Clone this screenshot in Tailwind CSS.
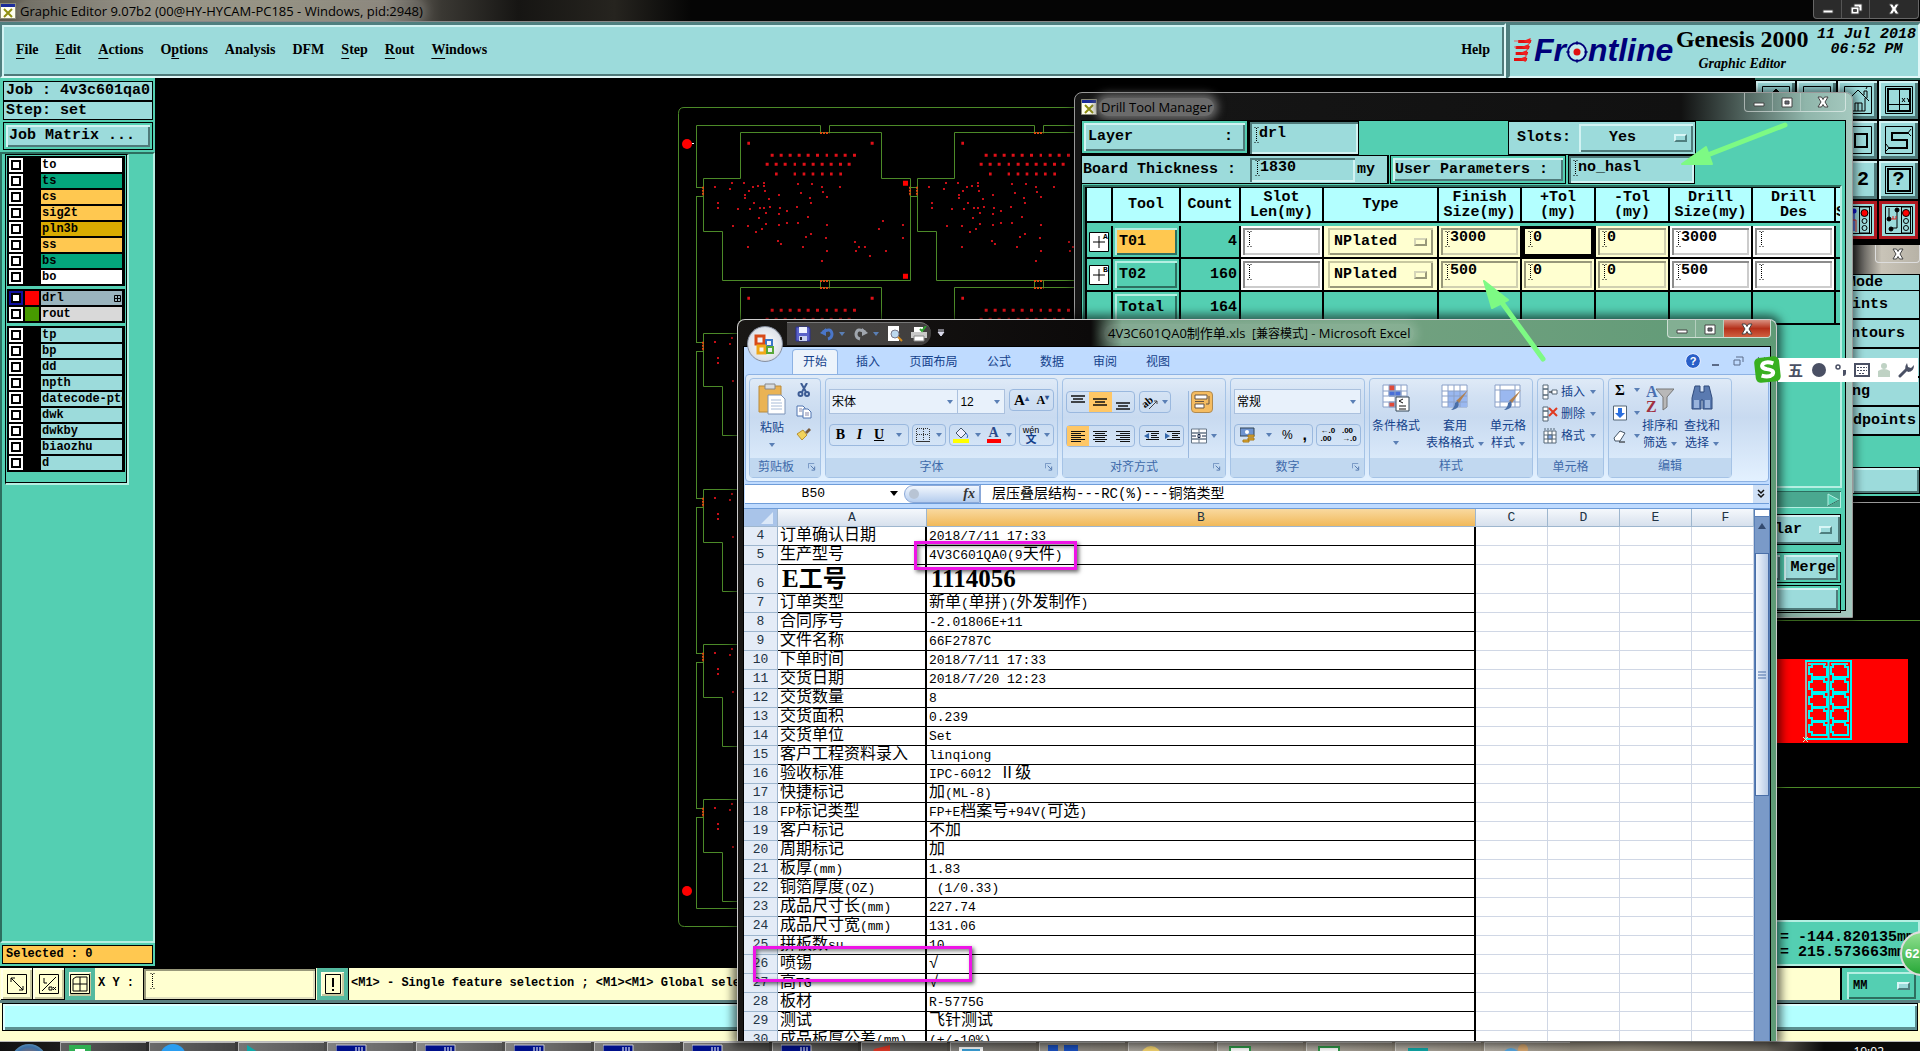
<!DOCTYPE html>
<html lang="zh-CN">
<head>
<meta charset="utf-8">
<title>Graphic Editor</title>
<script src="https://cdn.jsdelivr.net/npm/@tailwindcss/browser@4"></script>
</head>
<body class="relative flex h-screen flex-col overflow-hidden bg-black font-['Liberation_Mono','Noto_Sans_CJK_SC',monospace] text-[15px] font-bold leading-[18px] text-black">

<!-- shared icon shapes -->
<svg class="hidden">
  <symbol id="ibeam" viewBox="0 0 5 16"><path d="M.5 .5h1M3.500 .5h1M.5 15.500h1M3.500 15.500h1" stroke="#000"/><path d="M2.500 1v14" stroke="#000" stroke-dasharray="1 1"/></symbol>
  <symbol id="xlogo" viewBox="0 0 16 16"><path d="M.5 .5h15v15H.5z" fill="#fffff0" stroke="#8a8a78"/><path d="M1 1h14v3H1z" fill="#1a2a9a"/><path d="m4 6 8 8M12 6l-8 8" stroke="#8f8f10" stroke-width="2"/></symbol>
  <symbol id="knob" viewBox="0 0 13 8"><path d="M0 0h13v8H0z" fill="#4f7f7f"/><path d="M0 0h13l-2 2H2v4L0 8z" fill="#d8f6f6"/><path d="M2 2h9v4H2z" fill="#9cdbdb"/></symbol>
  <symbol id="knoby" viewBox="0 0 13 8"><path d="M0 0h13v8H0z" fill="#98987a"/><path d="M0 0h13l-2 2H2v4L0 8z" fill="#d5d5b8"/><path d="M2 2h9v4H2z" fill="#ffffd0"/></symbol>
  <symbol id="dn" viewBox="0 0 6 4"><path d="M0 0h6L3 4z" fill="#5a7fb5"/></symbol>
  <symbol id="launch" viewBox="0 0 9 9"><path d="M.5 6V.5H7" fill="none" stroke="#6d8fbf"/><path d="M3 3l4 4M7.500 4v4H4" fill="none" stroke="#4a70a8"/></symbol>
  <symbol id="min" viewBox="0 0 14 12"><path d="M2 7h10v3H2z" fill="#fff" stroke="#444"/></symbol>
  <symbol id="max" viewBox="0 0 14 12"><path d="M2 2h10v9H2z" fill="#fff" stroke="#444"/><path d="M5 5h4v3H5z" fill="#667" stroke="#444"/></symbol>
  <symbol id="restore" viewBox="0 0 14 12"><path d="M5 1h8v7H5z" fill="#fff" stroke="#444"/><path d="M2 4h8v7H2z" fill="#fff" stroke="#444"/><path d="M4.500 6.500h3v2h-3z" fill="#444" stroke="#444"/></symbol>
  <symbol id="cls" viewBox="0 0 14 12"><path d="M2 1h3.500L7 3.500 8.500 1H12L9 6l3 5H8.500L7 8.500 5.500 11H2l3-5z" fill="#fff" stroke="#444"/></symbol>
</svg>

<!-- title bar -->
<header class="flex h-[21px] shrink-0 items-center bg-[linear-gradient(90deg,#5b584e_0,#8d897c_8%,#8a8776_14%,#7f7a70_20%,#3a3833_23%,#161513_27%,#26241f_32%,#050505_36%)] font-['Open_Sans','Noto_Sans',sans-serif] text-[13px] font-normal">
  <svg class="h-4 w-4"><use href="#xlogo"/></svg>
  <h1 class="ml-1 rounded-full bg-white/10 shadow-[0_0_10px_4px_rgba(255,255,255,.15)]">Graphic Editor 9.07b2 (00@HY-HYCAM-PC185 - Windows, pid:2948)</h1>
  <div class="ml-auto mr-px flex h-[19px] self-start rounded-b border border-t-0 border-[#666] bg-[#2b2b2b]">
    <button aria-label="Minimize" class="flex w-7 items-center justify-center border-r border-[#555]"><svg class="h-3 w-3.5"><use href="#min"/></svg></button>
    <button aria-label="Restore" class="flex w-7 items-center justify-center border-r border-[#555]"><svg class="h-3 w-3.5"><use href="#restore"/></svg></button>
    <button aria-label="Close" class="flex w-12 items-center justify-center"><svg class="h-3 w-3.5"><use href="#cls"/></svg></button>
  </div>
</header>

<!-- menu bar and brand -->
<div class="flex h-[57px] shrink-0 border-t border-[#888] bg-[#4f7f7f] pt-px">
  <nav class="flex grow items-center gap-[17px] border-2 border-l-[#4f7f7f] border-t-[#4f7f7f] border-b-[#e0f8f8] border-r-[#e0f8f8] bg-[#9cdbdb] px-3.5 pb-0.5 font-['Liberation_Serif',serif] text-[14px] shadow-[inset_2px_2px_#d2f3f3,inset_-2px_-2px_#4f7a7a]">
    <a href="#"><u class="underline-offset-4">F</u>ile</a><a href="#"><u class="underline-offset-4">E</u>dit</a><a href="#"><u class="underline-offset-4">A</u>ctions</a><a href="#">O<u class="underline-offset-4">p</u>tions</a><a href="#">Analysis</a><a href="#">DFM</a><a href="#"><u class="underline-offset-4">S</u>tep</a><a href="#"><u class="underline-offset-4">R</u>out</a><a href="#"><u class="underline-offset-4">W</u>indows</a>
    <a href="#" class="ml-auto">Help</a>
  </nav>
  <div class="ml-0.5 flex w-[412px] border-2 border-l-[#4f7f7f] border-t-[#4f7f7f] border-b-[#e0f8f8] border-r-[#e0f8f8] bg-[#9cdbdb] pl-1">
    <div class="flex items-center pb-0.5 font-['Liberation_Sans',sans-serif] text-[32px] italic text-[#00007a]">
      <svg class="h-6 w-5" viewBox="0 0 24 24" preserveAspectRatio="none"><path d="M5 2h16l-1 3H5zM2 8h17l-1 3H2zM2 14h15l-1 3H2zM0 20h16l-1 3H0z" fill="#e01010"/><path d="M11 3l9-3-1 6zM9 9l9-3-1 6zM7 15l9-3-1 6zM6 21l9-3-1 6z" fill="#f02020"/><path d="M5 3H0M3 9H0" stroke="#e55"/></svg>
      <span>Fr</span>
      <svg class="mt-1 h-[22px] w-[22px]" viewBox="0 0 22 22"><circle cx="11" cy="11" r="9" fill="#c3ecec" stroke="#00007a" stroke-width="2"/><path d="M11 0v4M11 18v4M0 11h4M18 11h4" stroke="#00007a"/><circle cx="11" cy="11" r="3.500" fill="#e01010"/></svg>
      <span>ntline</span>
    </div>
    <div class="ml-auto w-[138px] pt-0.5 text-center font-['Liberation_Serif',serif]">
      <p class="text-[24px] leading-6">Genesis 2000</p>
      <p class="mt-1 text-[14px] italic">Graphic Editor</p>
    </div>
    <div class="ml-1 w-[103px] pt-0.5 text-center text-[15px] italic leading-[15px]"><p>11 Jul 2018</p><p>06:52 PM</p></div>
  </div>
</div>

<!-- workspace -->
<main class="flex min-h-0 grow">
  <aside class="flex w-[155px] shrink-0 flex-col bg-[#54cfb2]">
    <div class="mx-[3px] mt-[3px] flex h-[39px] w-[150px] flex-col divide-y-2 divide-black border border-black bg-[#9cdbdb]">
      <p class="h-[20px] whitespace-pre pl-0.5">Job : 4v3c601qa0</p><p class="pl-0.5">Step: set</p>
    </div>
    <div class="mx-[3px] mt-0.5 w-[150px] border border-black p-0.5">
      <button class="h-[22px] w-full bg-[#9cdbdb] pl-[3px] text-left shadow-[inset_2px_2px_#d2f3f3,inset_-2px_-2px_#4f7a7a]">Job Matrix ...</button>
    </div>
    <div class="mt-0.5 flex-1 border-2 border-l-[#2d6f60] border-t-[#2d6f60] border-b-[#b5efe2] border-r-[#b5efe2]">
      <div class="ml-[3px] w-[124px] border border-r-2 border-b-2 border-black border-b-[#b5efe2] border-r-[#b5efe2] text-[12px] leading-[14px]">
        <ul id="layers" class="flex h-[328px] flex-col border-b border-r border-black pl-px pr-px pt-px"></ul>
      </div>
    </div>
    <div class="p-0.5"><p class="h-[19px] border border-black bg-[#ffc850] pl-[3px] text-[12px] leading-4">Selected : 0</p></div>
  </aside>

  <!-- board canvas -->
  <section class="min-w-0 grow overflow-hidden">
    <svg class="h-full w-full" fill="none" stroke="#4c8a28">
      <defs>
        <g id="holes" stroke="#c81018" stroke-width="6">
          <path stroke-width="9" stroke="#e01018" d="M262 190h8M632 190h9M332 226h9M359 226h9M386 226h9M413 226h9M440 226h9M468 226h9M497 226h7M524 226h9M551 226h9M579 226h9M317 253h9M344 253h9M371 253h9M401 253h7M428 253h9M455 253h9M482 253h9M509 253h9M537 253h9M563 253h9M345 282h8M401 282h7M428 282h8M455 282h8M483 282h8M510 282h8M538 282h8"/>
          <path d="M162 321h6M213 309h6M207 327h6M249 309h6M276 321h6M291 318h6M309 309h6M309 318h6M264 333h6M312 333h6M252 345h6M252 354h6M324 357h6M354 345h6M171 369h6M171 384h6M231 387h6M267 387h6M279 369h6M297 384h6M309 384h6M327 381h6M315 399h6M294 414h6M357 384h6M354 402h6M378 393h6M408 381h6M420 339h6M411 312h6M453 312h6M483 321h6M486 336h6M498 351h6M537 321h6M447 354h6M450 369h6M441 411h6M411 429h6M378 429h6M354 435h6M315 432h6M303 447h6M285 456h6M261 438h6M216 438h6M261 501h6M351 483h6M360 492h6M435 471h6M450 462h6M426 501h6M498 435h6M495 474h6M498 513h6M483 543h6M582 486h6M594 501h6M585 513h6M612 501h6M627 528h6M675 513h6M654 447h6M666 423h6M726 435h6M726 474h6"/>
          <path stroke="#f00" stroke-width="15" d="M729 310h15M729 589h15"/>
          <path stroke="#e04a10" stroke-dasharray="6 3" d="M480 159h28M480 603h28M480 624h28M129 320v28M750 320v28"/>
        </g>
        <g id="board">
          <path d="M740.500 178.500v-46h141v46h29v102h-188v-49h-19v-53zM820.500 280v8M829.500 280v8M696 187.500h7M696 196.500h7M911 187.500h7M911 196.500h7"/>
          <use href="#holes" transform="translate(660 80) scale(.3333)"/>
        </g>
      </defs>
      <g transform="translate(-155 -78)">
        <path d="M1920 107.500H684q-5.500 0-5.500 6V920q0 6.500 6 6.500H1920M696.500 187v-61.500h124v7M829.500 132v-6.500h205v7M1043.500 132v-6.500H1900M696.500 197v146M696.500 351v147M696.500 507v146M696.500 662v146M696.500 817v91.500H1000M1777 620.500h143M1777 787.500h143"/>
        <use href="#board"/><use href="#board" x="214"/>
        <use href="#board" y="155"/><use href="#board" x="214" y="155"/>
        <use href="#board" y="311"/><use href="#board" y="466"/><use href="#board" y="621"/>
        <g fill="#f00" stroke="none"><circle cx="687" cy="144" r="5"/><circle cx="687" cy="891" r="5"/></g>
        <path d="M692 143.500h2" stroke="#fff"/>
        <path d="M1770 659h138v84h-138z" fill="#f00" stroke="none"/>
        <g stroke="#00f6f6" stroke-width="2">
          <path d="M1806 661h45v78h-45zM1828.500 662v77"/>
          <path stroke="#9ab0b0" d="M1806 662v76M1808 664h18M1831 664h17"/>
          <path id="pv" d="M1809 667l3 0v-3h12v3h3v10h-15v-3h-3zM1831 667h2v-3h12v3h3v10h-15v-3h-2z"/>
          <use href="#pv" y="15"/><use href="#pv" y="30"/><use href="#pv" y="44"/><use href="#pv" y="58"/>
        </g>
        <path d="M1803 742l5-5M1803 737l5 5" stroke="#cfc"/>
      </g>
    </svg>
  </section>
</main>

<!-- coordinate and status rows -->
<footer class="shrink-0">
  <div class="flex h-[34px] border-t-2 border-black bg-[#ffffd0] text-[12px]">
    <button aria-label="Zoom area" class="ml-px flex w-8 items-center justify-center border-r border-b border-black shadow-[inset_2px_2px_#ffffe8,inset_-2px_-2px_#c8c8a0]"><svg class="h-5 w-5" viewBox="0 0 20 20" fill="none" stroke="#000"><path d="M.5 .5h19v19H.5zM4 4l12 12M4 8V4h4M16 12v4h-4"/></svg></button>
    <button aria-label="Toggle coordinates" class="flex w-8 items-center justify-center border-r border-b border-black shadow-[inset_2px_2px_#ffffe8,inset_-2px_-2px_#c8c8a0]"><svg class="h-5 w-5" viewBox="0 0 20 20" fill="none" stroke="#000"><path d="M.5 .5h19v19H.5zM3 17 17 3M5 4v5h3M10 13h3v3h-3zM14 13l3 3M17 13l-3 3"/></svg></button>
    <button aria-label="Grid" class="flex w-[30px] items-center justify-center border-4 border-[#54b99f] shadow-[inset_1px_1px_#ffffe8,inset_-2px_-2px_#c8c8a0]"><svg class="h-5 w-5 shrink-0" viewBox="0 0 20 20" fill="none" stroke="#000"><path d="M.5 .5h19v19H.5zM3 5l3-2h11v14H3zM10 3v14M3 10h14"/></svg></button>
    <label for="xy" class="w-12 whitespace-pre pl-[3px] leading-[30px]">X Y :</label>
    <span class="flex w-[173px] border border-black p-1 shadow-[inset_2px_2px_#98987a,inset_-2px_-2px_#e0e0c0]"><svg class="ml-0.5 h-4 w-[5px] shrink-0"><use href="#ibeam"/></svg><input id="xy" class="w-full min-w-0 outline-none"></span>
    <button aria-label="Message" class="ml-px flex w-[31px] items-center justify-center border-4 border-[#54b99f] shadow-[inset_1px_1px_#ffffe8,inset_-2px_-2px_#c8c8a0]"><svg class="h-5 w-4 shrink-0" viewBox="0 0 16 20" fill="none" stroke="#000"><path d="M.5 .5h15v19H.5z"/><path d="M8 4v9M8 15v2" stroke-width="2"/></svg></button>
    <p class="grow border-l border-black pl-0.5 leading-[30px]">&lt;M1&gt; - Single feature selection ; &lt;M1&gt;&lt;M1&gt; Global selec</p>
    <div class="w-[80px] border-l-2 border-black bg-[#54cfb2] p-1 pl-[5px]"><button class="flex h-[27px] w-[69px] items-center justify-between px-[6px] shadow-[inset_2px_2px_#b5efe2,inset_-2px_-2px_#2d6f60]">MM <svg class="h-2 w-[13px]"><use href="#knob"/></svg></button></div>
  </div>
  <div class="border-t-[3px] border-[#5c8080] bg-[#ffffd0] pb-2.5"><div class="mx-0.5 h-7 border border-black bg-[#b3ffff] shadow-[inset_2px_2px_#dcffff,inset_-2px_-3px_#5c9090]"></div></div>
  <!-- taskbar -->
  <div id="tasks" class="flex h-2.5 gap-[3px] overflow-hidden border-t border-[#bbb] bg-[linear-gradient(90deg,#111_0,#555_20%,#3b3935_45%,#8b8478_60%,#978f80_85%,#6f6a60_92%,#0a0a0a_95%)] pr-2 font-['Open_Sans',sans-serif] text-[12px] font-normal text-white"></div>
</footer>

<!-- coordinate readout -->
<div class="absolute right-0 top-[920px] h-[46px] w-[150px] border-2 border-b-[#b5efe2] border-l-[#2d6f60] border-r-[#b5efe2] border-t-[#b5efe2] bg-[#54cfb2] pl-2 pt-2 leading-[15px] whitespace-pre"><p>= -144.820135mm</p><p>= 215.573663mm</p></div>

<!-- tool palette -->
<div class="absolute right-0 top-[78px] grid h-[165px] w-[165px] grid-cols-[repeat(4,39px)] grid-rows-[repeat(4,38px)] gap-0.5 border-t-2 border-[#2d6f60] bg-black p-px">
  <button aria-label="Up" class="flex items-center justify-center bg-[#9cdbdb] shadow-[inset_2px_2px_#d2f3f3,inset_-3px_-3px_#4f7a7a]"><svg class="h-7 w-7" viewBox="0 0 28 28" fill="none" stroke="#000"><path d="M.5 .5h27v27H.5z"/><path d="M14 3l5 5h-3v8h-4V8H9z" fill="#000"/></svg></button>
  <button aria-label="Down" class="flex items-center justify-center bg-[#9cdbdb] shadow-[inset_2px_2px_#d2f3f3,inset_-3px_-3px_#4f7a7a]"><svg class="h-7 w-7" viewBox="0 0 28 28" fill="none" stroke="#000"><path d="M.5 .5h27v27H.5z"/></svg></button>
  <button aria-label="Home" class="flex items-center justify-center bg-[#9cdbdb] shadow-[inset_2px_2px_#d2f3f3,inset_-3px_-3px_#4f7a7a]"><svg class="h-7 w-7" viewBox="0 0 28 28" fill="none" stroke="#000"><path d="M.5 .5h27v27H.5zM3 15 14 4l11 11M7 12v13h14V12M11 25v-8h7v8M14 17v8M20 9V5h3v7M22 3l1-2"/></svg></button>
  <button aria-label="Coordinates view" class="flex items-center justify-center bg-[#9cdbdb] shadow-[inset_2px_2px_#d2f3f3,inset_-3px_-3px_#4f7a7a]"><svg class="h-7 w-7" viewBox="0 0 28 28" fill="none" stroke="#000"><path d="M.5 .5h27v27H.5z"/><path d="M3 3h22v22H3z" stroke-width="2"/><path d="M14.500 3v22M3 18.500h22M17 12l3 4M20 12l-3 4M22 12l1.500 2L25 12M23.500 14v2"/></svg></button>
  <button aria-label="Back" class="bg-[#9cdbdb]"></button><button aria-label="Forward" class="bg-[#9cdbdb]"></button>
  <button aria-label="Frame" class="flex items-center justify-center bg-[#9cdbdb] shadow-[inset_2px_2px_#d2f3f3,inset_-3px_-3px_#4f7a7a]"><svg class="h-7 w-7" viewBox="0 0 28 28" fill="none" stroke="#000"><path d="M.5 .5h27v27H.5z"/><path d="M11 8h12v13H11z" stroke-width="2"/></svg></button>
  <button aria-label="Path" class="flex items-center justify-center bg-[#9cdbdb] shadow-[inset_2px_2px_#d2f3f3,inset_-3px_-3px_#4f7a7a]"><svg class="h-7 w-7" viewBox="0 0 28 28" fill="none" stroke="#000"><path d="M.5 .5h27v27H.5z"/><path d="M23 7H7v7h15v8H4" stroke-width="2"/><path d="M26 3l-3 4 3 3M1 18l3 4-3 3"/></svg></button>
  <button aria-label="Zoom in" class="bg-[#9cdbdb]"></button><button aria-label="Zoom out" class="bg-[#9cdbdb]"></button>
  <button class="flex items-center justify-end bg-[#9cdbdb] pr-2 text-[20px] shadow-[inset_2px_2px_#d2f3f3,inset_-3px_-3px_#4f7a7a]">:2</button>
  <button aria-label="Query" class="flex items-center justify-center bg-[#9cdbdb] text-[20px] shadow-[inset_2px_2px_#d2f3f3,inset_-3px_-3px_#4f7a7a]"><span class="flex h-6 w-6 items-center justify-center border-2 border-black outline outline-offset-1">?</span></button>
  <button aria-label="Snap" class="bg-[#9cdbdb]"></button><button aria-label="Measure" class="bg-[#9cdbdb]"></button>
  <button aria-label="Stop nets" class="flex items-center justify-center border-[3px] border-[#b01820] bg-[#9cdbdb]"><svg class="h-7 w-7 shrink-0" viewBox="0 0 28 28" fill="none" stroke="#000"><path d="M.5 .5h27v27H.5zM15.500 1h10v26h-10z"/><circle cx="20.500" cy="7" r="3.500" fill="#f00"/><circle cx="20.500" cy="15" r="2.500"/><circle cx="20.500" cy="22" r="2.500"/><circle cx="10" cy="5" r="2.500" fill="#11c" stroke="none"/><path d="M10 7v18" stroke="#11c"/><path d="M4 14h8v12" stroke="#d22"/></svg></button>
  <button aria-label="Stop shorts" class="flex items-center justify-center border-[3px] border-[#b01820] bg-[#9cdbdb]"><svg class="h-7 w-7 shrink-0" viewBox="0 0 28 28" fill="none" stroke="#000"><path d="M.5 .5h27v27H.5zM16.500 1h9v26h-9z"/><circle cx="21" cy="7" r="3.500" fill="#f00"/><circle cx="21" cy="15" r="2.500"/><circle cx="21" cy="22" r="2.500"/><path d="M4 2v11M12 4v18H6"/><circle cx="4" cy="13" r="2" fill="#000"/><circle cx="12" cy="4" r="2" fill="#000"/><circle cx="6" cy="23" r="2" fill="#000"/><path d="M6 13h5M8 10v3M11 10v3" stroke="#d22"/></svg></button>
</div>

<!-- selection mode popup -->
<aside class="absolute right-0 top-[245px] flex h-[258px] w-[70px] flex-col border-b border-[#999] bg-black pb-1.5">
  <div class="flex h-[29px] shrink-0 items-start justify-end bg-[linear-gradient(90deg,#222,#c9c4b8_45%,#b7b2a6)]"><button aria-label="Close popup" class="flex h-[18px] w-[45px] items-center justify-center rounded-b border border-t-0 border-[#ddd]"><svg class="h-3 w-3.5"><use href="#cls"/></svg></button></div>
  <div class="flex flex-1 flex-col overflow-hidden border-l border-[#2d6f60] bg-[#54cfb2]">
    <p class="h-[17px] border border-black bg-[#9cdbdb] -indent-[5px] leading-4">Mode</p>
    <button class="h-[29px] border-b-2 border-r border-black bg-[#9cdbdb] text-left -indent-[17px]">Points</button>
    <button class="h-[29px] border-b-2 border-r border-black bg-[#9cdbdb] text-left -indent-[18px]">Contours</button>
    <button class="h-[29px] border-b-2 border-r border-black bg-[#9cdbdb] pl-2 text-left">s</button>
    <button class="h-[29px] border-b-2 border-r border-black bg-[#9cdbdb] pl-px text-left">ng</button>
    <button class="h-[29px] border-b-2 border-r border-black bg-[#9cdbdb] text-left -indent-[16px]">Endpoints</button>
    <button aria-label="Reset selection" class="mb-0.5 mt-auto h-[27px] border border-black bg-[#9cdbdb] shadow-[inset_2px_2px_#d2f3f3,inset_-2px_-2px_#4f7a7a]"></button>
  </div>
</aside>

<!-- drill tool manager -->
<section class="absolute left-[1074px] top-[92px] flex h-[526px] w-[779px] flex-col rounded-t-lg border border-[#999] bg-[linear-gradient(90deg,#161616_0,#111_78%,#8fb5aa_94%,#a5c9bf)] px-1.5 pb-1.5 shadow-[0_0_8px_3px_rgba(0,0,0,.5)]">
  <div class="flex h-[27px] shrink-0 items-center font-['Open_Sans','Noto_Sans',sans-serif] text-[13px] font-normal">
    <svg class="h-4 w-4"><use href="#xlogo"/></svg><h2 class="ml-0.5 rounded-full bg-[#6b6b6b] px-0.5 shadow-[0_0_8px_4px_#6b6b6b]">Drill Tool Manager</h2>
    <div class="ml-auto flex h-[19px] self-start rounded-b border border-t-0 border-white/50">
      <button aria-label="Minimize tool manager" class="flex w-7 items-center justify-center border-r border-white/30"><svg class="h-3 w-3.5"><use href="#min"/></svg></button>
      <button aria-label="Maximize tool manager" class="flex w-7 items-center justify-center border-r border-white/30"><svg class="h-3 w-3.5"><use href="#max"/></svg></button>
      <button aria-label="Close tool manager" class="flex w-11 items-center justify-center"><svg class="h-3 w-3.5"><use href="#cls"/></svg></button>
    </div>
  </div>
  <div class="flex min-h-0 flex-1 flex-col border border-black bg-[#54cfb2]">
    <div class="flex h-[34px] shrink-0">
      <div class="w-[167px] border-r-2 border-b-2 border-black p-0.5"><button class="flex h-full w-full items-center justify-between bg-[#9cdbdb] pl-1 pr-3 shadow-[inset_2px_2px_#d2f3f3,inset_-2px_-2px_#4f7a7a]"><span>Layer</span><span>:</span></button></div>
      <span class="flex w-[110px] border border-black bg-[#9cdbdb] p-1 pt-[3px] shadow-[inset_2px_2px_#4f7a7a,inset_-2px_-2px_#d2f3f3]"><svg class="mt-0.5 h-4 w-[5px] shrink-0"><use href="#ibeam"/></svg><input aria-label="Layer name" value="drl" class="h-[18px] w-full min-w-0 outline-none"></span>
      <div class="ml-[149px] flex w-[188px] items-center border border-black bg-[#9cdbdb] pl-2 pr-0.5"><span class="mr-2">Slots:</span><button class="flex h-[28px] flex-1 items-center justify-between bg-[#9cdbdb] pl-[30px] pr-1.5 shadow-[inset_2px_2px_#d2f3f3,inset_-2px_-2px_#4f7a7a]">Yes <svg class="h-2 w-[13px]"><use href="#knob"/></svg></button></div>
    </div>
    <div class="flex h-[29px] shrink-0">
      <div class="flex w-[307px] items-center border-y border-r-2 border-black bg-[#9cdbdb] pl-px"><label for="thick" class="w-[167px]">Board Thickness :</label><span class="flex h-[24px] w-[105px] p-1 pl-[5px] pt-0.5 shadow-[inset_2px_2px_#4f7a7a,inset_-2px_-2px_#d2f3f3]"><svg class="h-4 w-[5px] shrink-0"><use href="#ibeam"/></svg><input id="thick" value="1830" class="h-4 w-full min-w-0 outline-none"></span><span class="ml-0.5">my</span></div>
      <div class="ml-px w-[176px] border border-black p-0.5"><button class="h-full w-full bg-[#9cdbdb] pl-0.5 text-left shadow-[inset_2px_2px_#d2f3f3,inset_-2px_-2px_#4f7a7a]">User Parameters :</button></div>
      <span class="ml-0.5 flex w-[127px] border border-black bg-[#9cdbdb] p-1 shadow-[inset_2px_2px_#4f7a7a,inset_-2px_-2px_#d2f3f3]"><svg class="h-4 w-[5px] shrink-0"><use href="#ibeam"/></svg><input aria-label="User parameters" value="no_hasl" class="h-4 w-full min-w-0 outline-none"></span>
    </div>
    <div class="ml-px mr-[3px] mt-px h-[303px] shrink-0 overflow-hidden border-2 border-b-[#b5efe2] border-l-[#2d6f60] border-r-[#b5efe2] border-t-[#2d6f60]">
      <table class="w-[760px] table-fixed border-separate border-spacing-0 border-l-2 border-black">
        <colgroup><col class="w-[26px]"><col class="w-[68px]"><col class="w-[60px]"><col class="w-[83px]"><col class="w-[115px]"><col class="w-[83px]"><col class="w-[74px]"><col class="w-[74px]"><col class="w-[83px]"><col class="w-[83px]"><col></colgroup>
        <thead><tr class="h-9 bg-[#b3ffff] leading-[15px] [&>th]:border-r-2 [&>th]:border-b-2 [&>th]:border-t [&>th]:border-black [&>th]:p-0"><th></th><th>Tool</th><th>Count</th><th>Slot<br>Len(my)</th><th>Type</th><th>Finish<br>Size(my)</th><th>+Tol<br>(my)</th><th>-Tol<br>(my)</th><th>Drill<br>Size(my)</th><th>Drill<br>Des</th><th class="text-left"><br>S</th></tr></thead>
        <tbody id="tools" class="[&_td]:border-r-2 [&_td]:border-b-2 [&_td]:border-black [&_td]:p-0"></tbody>
      </table>
    </div>
    <div class="mr-1 mt-[3px] flex h-[17px] shrink-0 items-center justify-end bg-[#4aa890] shadow-[inset_1px_1px_#2d6f60,inset_-1px_-1px_#b5efe2]"><svg class="h-3.5 w-3.5" viewBox="0 0 14 14"><path d="M1 1l11 6-11 6z" fill="#54cfb2" stroke="#b5efe2"/><path d="M1 13l11-6" stroke="#2d6f60"/></svg></div>
    <div class="mr-1 mt-1.5 flex h-[31px] shrink-0 justify-end border border-black"><button class="flex w-[150px] items-center justify-end gap-[17px] bg-[#9cdbdb] pr-2 shadow-[inset_2px_2px_#d2f3f3,inset_-2px_-2px_#4f7a7a]">Regular <svg class="h-2 w-[13px]"><use href="#knob"/></svg></button></div>
    <div class="mr-1 mt-[7px] flex h-[31px] shrink-0 justify-end gap-1 border border-black p-0.5"><button class="w-[100px] bg-[#9cdbdb] shadow-[inset_2px_2px_#d2f3f3,inset_-2px_-2px_#4f7a7a]">Apply</button><button class="w-[54px] bg-[#9cdbdb] pl-1 shadow-[inset_2px_2px_#d2f3f3,inset_-2px_-2px_#4f7a7a]">Merge</button></div>
    <div class="mr-1 mt-0.5 flex h-[28px] shrink-0 border border-black p-0.5"><button aria-label="Close manager" class="w-full bg-[#9cdbdb] shadow-[inset_2px_2px_#d2f3f3,inset_-2px_-2px_#4f7a7a]"></button></div>
  </div>
</section>

<!-- spreadsheet window -->
<section class="absolute bottom-2.5 left-[737px] top-[319px] flex w-[1040px] flex-col rounded-t-lg border border-b-0 border-[#ccc] bg-[linear-gradient(90deg,#191715_0,#0c0a0a_34%,#6f9c80_37%,#72a180_62%,#5f9a76_100%)] px-[5px] font-['Liberation_Sans','Noto_Sans_CJK_SC',sans-serif] text-[12px] font-normal shadow-[0_0_10px_4px_rgba(0,0,0,.6)]">
  <div class="relative flex h-[26px] shrink-0 items-center">
    <div class="ml-11 flex h-[23px] w-[144px] items-center gap-2 rounded-r-full border-t border-[#777] bg-white/20 pl-2">
      <svg class="h-4 w-4" viewBox="0 0 16 16"><path d="M1 1h13l1 2v12H1z" fill="#5a62c8" stroke="#2b3190"/><path d="M4 1h8v6H4z" fill="#f0f4ff"/><path d="M4 10h8v5H4z" fill="#c8d0f0"/><path d="M5 11h2v3H5z" fill="#223"/></svg>
      <svg class="h-4 w-4" viewBox="0 0 16 16"><path d="M4 6q8-5 9 2 0 4-4 5" fill="none" stroke="#4a76c8" stroke-width="3"/><path d="M1 7l6-5v8z" fill="#4a76c8"/></svg><svg class="-ml-1 h-1 w-1.5"><use href="#dn"/></svg>
      <svg class="h-4 w-4" viewBox="0 0 16 16"><path d="M12 6Q4 1 3 8q0 4 4 5" fill="none" stroke="#a0a6ae" stroke-width="3"/><path d="M15 7L9 2v8z" fill="#a0a6ae"/></svg><svg class="-ml-1 h-1 w-1.5"><use href="#dn"/></svg>
      <svg class="h-4 w-4 shrink-0" viewBox="0 0 16 16"><path d="M1 0h11v15H1z" fill="#fff"/><circle cx="8" cy="8" r="4" fill="#bcd8ee" stroke="#778"/><path d="M11 11l4 4" stroke="#d08a20" stroke-width="2"/></svg>
      <svg class="h-4 w-4 shrink-0" viewBox="0 0 16 16"><path d="M3 1h9v6H3z" fill="#fff"/><path d="M0 6h16v6H0z" fill="#c8c8c8"/><path d="M3 10h10v5H3z" fill="#fff" stroke="#888"/><path d="M9 3l2 2 4-5" fill="none" stroke="#30a030" stroke-width="2"/></svg>
    </div>
    <svg class="ml-1.5 h-2 w-2" viewBox="0 0 8 8"><path d="M1 1h6M1 3l3 4 3-4z" fill="#dde" stroke="#dde"/></svg>
    <h2 class="ml-[159px] whitespace-pre rounded-full bg-white/15 px-1 shadow-[0_0_8px_4px_rgba(255,255,255,.15)] font-['Open_Sans','Noto_Sans_CJK_SC',sans-serif] text-[13px]">4V3C601QA0制作单.xls <span class="text-[12px]"> [兼容模式]</span> - Microsoft Excel</h2>
    <div class="ml-auto flex h-[18px] self-start overflow-hidden rounded-b border border-t-0 border-white/60 bg-white/20">
      <button aria-label="Minimize workbook" class="flex w-7 items-center justify-center border-r border-white/40"><svg class="h-3 w-3.5"><use href="#min"/></svg></button>
      <button aria-label="Maximize workbook" class="flex w-7 items-center justify-center border-r border-white/40"><svg class="h-3 w-3.5"><use href="#max"/></svg></button>
      <button aria-label="Close workbook" class="flex w-[46px] items-center justify-center bg-[linear-gradient(#d99080,#b5301a_50%,#d06040)]"><svg class="h-3 w-3.5"><use href="#cls"/></svg></button>
    </div>
    <!-- office button lies over title and tabs -->
    <button aria-label="Office" class="absolute left-1 top-[6px] h-9 w-9 rounded-full border border-[#8890a0] bg-[radial-gradient(#fff,#dfe3ea_65%,#aab2c0)]"><svg class="m-auto h-6 w-6" viewBox="0 0 24 24" fill="none" stroke-width="3"><path d="M3 4h8v8H3z" stroke="#d84a18"/><path d="M13 8h6v6h-6z" stroke="#3a76c8" stroke-width="2"/><path d="M5 14h7v7H5z" stroke="#f0a818"/><path d="M14 15h6v6h-6z" stroke="#58a838" stroke-width="2"/></svg></button>
  </div>
  <div class="flex min-h-0 flex-1 flex-col border border-b-0 border-black bg-[#bfdbff]">
    <nav class="flex h-[27px] shrink-0 items-end text-[#15428b]">
      <a href="#" class="ml-12 flex h-[25px] w-[46px] items-center justify-center rounded-t border border-b-0 border-[#8db2e3] bg-[#ecf3fb]">开始</a>
      <a href="#" class="flex h-[25px] w-[60px] items-center justify-center">插入</a><a href="#" class="flex h-[25px] w-[71px] items-center justify-center">页面布局</a><a href="#" class="flex h-[25px] w-[60px] items-center justify-center">公式</a><a href="#" class="flex h-[25px] w-[46px] items-center justify-center">数据</a><a href="#" class="flex h-[25px] w-[60px] items-center justify-center">审阅</a><a href="#" class="flex h-[25px] w-[46px] items-center justify-center">视图</a>
      <span class="mb-1.5 ml-auto mr-1 flex items-center gap-2.5"><span class="flex h-3.5 w-3.5 items-center justify-center rounded-full bg-[#2a5fc8] text-[11px] font-bold text-white outline outline-[#dde8ff]">?</span><svg class="h-2.5 w-14" viewBox="0 0 56 10" fill="none" stroke="#5a6a88" stroke-width="2"><path d="M2 9h7"/><path d="M24 4h6v5h-6zM26 1h7v5M48 1l7 8M55 1l-7 8" stroke-width="1"/></svg></span>
    </nav>
    <div class="mx-px flex h-[108px] shrink-0 gap-1 rounded border border-[#8db2e3] bg-[linear-gradient(#e2ecf8,#d2e1f3_20%,#c8daf0_40%,#e3f1ff)] p-[3px] text-[#15428b]">
      <!-- clipboard -->
      <div class="relative flex w-[72px] flex-col rounded border border-[#a5c3e6]">
        <div class="flex flex-1 gap-2.5 pl-2 pt-1">
          <button class="flex w-[28px] flex-col items-center"><svg class="h-8 w-7" viewBox="0 0 28 32"><path d="M1 3h22v26H1z" fill="#eab354" stroke="#b98a3a"/><path d="M7 1h10v5H7z" fill="#d8dce0" stroke="#888"/><path d="M10 12h13l4 4v15H10z" fill="#fff" stroke="#7d94b8"/><path d="M13 17h10M13 20h11M13 23h11M13 26h11" stroke="#a8bcd8"/></svg><span class="mt-1">粘贴</span><svg class="mt-1.5 h-1 w-1.5"><use href="#dn"/></svg></button>
          <div class="flex flex-col gap-2"><svg class="h-3.5 w-4" viewBox="0 0 16 14" fill="none" stroke="#3d5c94" stroke-width="2"><path d="M5 0l5 9M11 0L6 9"/><circle cx="4.500" cy="11" r="2"/><circle cx="11" cy="11" r="2"/></svg><svg class="h-3.5 w-4" viewBox="0 0 16 14"><path d="M1 1h6l2 2v8H1z" fill="#fff" stroke="#5074b0"/><path d="M7 4h5l3 3v6H7z" fill="#fff" stroke="#5074b0"/><path d="M9 8h4M9 10h4M3 4h3M3 6h3" stroke="#88a"/></svg><svg class="h-3.5 w-4" viewBox="0 0 16 14"><path d="M1 7l6-4 4 5-5 5z" fill="#f2d35c" stroke="#b89030"/><path d="M9 5l4-4 2 2-4 4z" fill="#7a5a3a"/></svg></div>
        </div>
        <p class="h-[19px] bg-[#c1d8f0] pl-2 text-[#3e6aaa]">剪贴板</p><svg class="absolute bottom-1.5 right-1 h-2 w-2"><use href="#launch"/></svg>
      </div>
      <!-- font -->
      <div class="relative flex w-[233px] flex-col rounded border border-[#a5c3e6]">
        <div class="flex flex-1 flex-col gap-2.5 px-[3px] pt-2.5">
          <div class="flex h-[25px] text-black"><span class="flex w-[130px] items-center justify-between border border-[#abc1de] bg-[#e8f1fb] px-0.5">宋体<svg class="mr-0.5 h-1 w-1.5"><use href="#dn"/></svg></span><span class="flex w-[47px] items-center justify-between border border-l-0 border-[#abc1de] bg-[#e8f1fb] px-0.5">12<svg class="mr-0.5 h-1 w-1.5"><use href="#dn"/></svg></span>
            <span class="ml-1 flex h-[22px] w-[45px] items-center justify-around rounded-sm border border-[#9ab8de] font-['Liberation_Serif',serif] font-bold"><span class="text-[15px]">A<sup class="text-[8px] text-[#2a5090]">▴</sup></span><span class="text-[12px]">A<sup class="text-[8px] text-[#2a5090]">▾</sup></span></span></div>
          <div class="flex h-[22px] gap-[3px] font-['Liberation_Serif','Noto_Sans_CJK_SC',serif] text-[14px] text-black">
            <span class="flex w-[80px] items-center justify-around rounded-sm border border-[#9ab8de]"><button class="font-bold">B</button><button class="font-bold italic">I</button><button class="font-bold underline">U</button><svg class="h-1 w-1.5"><use href="#dn"/></svg></span>
            <span class="flex w-[35px] items-center justify-around rounded-sm border border-[#9ab8de]"><svg class="h-3.5 w-3.5" viewBox="0 0 14 14" stroke="#333"><path d="M.5 1v12M7.500 1v12M13.500 1v12M1 .5h12M1 6.500h12" stroke-dasharray="1 1"/><path d="M0 13.500h14"/></svg><svg class="h-1 w-1.5"><use href="#dn"/></svg></span>
            <span class="flex w-[67px] items-center justify-around rounded-sm border border-[#9ab8de]"><svg class="h-4 w-4" viewBox="0 0 16 16"><path d="M3 6l5-5 5 5-5 5z" fill="#eef" stroke="#456"/><path d="M13 6q3 3 1 5" stroke="#36c" fill="none"/><path d="M0 12h16v4H0z" fill="#ff0"/></svg><svg class="h-1 w-1.5"><use href="#dn"/></svg><span class="border-b-4 border-[#f00] px-0.5 font-bold leading-3 text-[#2a4a8a]">A</span><svg class="h-1 w-1.5"><use href="#dn"/></svg></span>
            <span class="flex w-[35px] items-center justify-around rounded-sm border border-[#9ab8de]"><span class="flex flex-col text-center font-['Liberation_Sans','Noto_Sans_CJK_SC',sans-serif] text-[9px] leading-[8px]">wén<b class="text-[11px] leading-[10px] text-[#15428b]">文</b></span><svg class="h-1 w-1.5"><use href="#dn"/></svg></span>
          </div>
        </div>
        <p class="h-[19px] bg-[#c1d8f0] pr-5 text-center text-[#3e6aaa]">字体</p><svg class="absolute bottom-1.5 right-1 h-2 w-2"><use href="#launch"/></svg>
      </div>
      <!-- alignment -->
      <div class="relative flex w-[164px] flex-col rounded border border-[#a5c3e6]">
        <div class="flex flex-1 gap-1 px-[3px] pt-3">
          <div class="flex flex-col gap-3">
            <div class="flex h-[22px] w-[69px] rounded-sm border border-[#9ab8de]"><button aria-label="Top align" class="flex w-[22px] justify-center pt-[3px]"><svg class="h-2 w-3.5" viewBox="0 0 14 8"><path d="M0 1h14M2 4h10M0 7h14" stroke="#111" stroke-width="1.500"/></svg></button><button aria-label="Middle align" class="flex w-6 items-center justify-center bg-[#ffc766]"><svg class="h-2 w-3.5" viewBox="0 0 14 8"><path d="M0 1h14M2 4h10M0 7h14" stroke="#111" stroke-width="1.500"/></svg></button><button aria-label="Bottom align" class="flex w-[22px] items-end justify-center pb-0.5"><svg class="h-2 w-3.5" viewBox="0 0 14 8"><path d="M0 1h14M2 4h10M0 7h14" stroke="#111" stroke-width="1.500"/></svg></button></div>
            <div class="flex h-[22px] w-[69px] rounded-sm border border-[#9ab8de]"><button aria-label="Align left" class="flex w-[22px] items-center justify-center bg-[#ffc766]"><svg class="h-3 w-3.5" viewBox="0 0 14 12"><path d="M0 1.500h14M0 3.500h10M0 5.500h14M0 7.500h10M0 9.500h14M0 11.500h10" stroke="#111"/></svg></button><button aria-label="Align center" class="flex w-6 items-center justify-center"><svg class="h-3 w-3.5" viewBox="0 0 14 12"><path d="M0 1.500h14M2 3.500h10M0 5.500h14M2 7.500h10M0 9.500h14M2 11.500h10" stroke="#111"/></svg></button><button aria-label="Align right" class="flex w-[22px] items-center justify-center"><svg class="h-3 w-3.5" viewBox="0 0 14 12"><path d="M0 1.500h14M4 3.500h10M0 5.500h14M4 7.500h10M0 9.500h14M4 11.500h10" stroke="#111"/></svg></button></div>
          </div>
          <div class="flex w-[45px] flex-col gap-3">
            <div class="flex h-[22px] w-8 items-center justify-around rounded-sm border border-[#9ab8de] text-[10px] text-black"><svg class="h-4 w-4" viewBox="0 0 16 16"><text x="0" y="12" font-size="11" font-weight="bold" font-family="Liberation Serif" transform="rotate(-40 5 9)">ab</text><path d="M7 15l8-8M15 7h-3M15 7v3" stroke="#444" fill="none"/></svg><svg class="h-1 w-1.5"><use href="#dn"/></svg></div>
            <div class="flex h-[22px] items-center justify-around rounded-sm border border-[#9ab8de]"><svg class="h-3 w-4" viewBox="0 0 16 12"><path d="M3 1.500h13M8 3.500h8M8 5.500h6M8 7.500h8M3 9.500h13" stroke="#111"/><path d="M6 3v6L1 6z" fill="#36a"/></svg><svg class="h-3 w-4" viewBox="0 0 16 12"><path d="M3 1.500h13M8 3.500h8M8 5.500h6M8 7.500h8M3 9.500h13" stroke="#111"/><path d="M1 3v6l5-3z" fill="#36a"/></svg></div>
          </div>
          <div class="flex flex-col gap-3 border-l border-[#9ab8de] pl-0.5">
            <button aria-label="Wrap text" class="flex h-[22px] w-[22px] items-center justify-center rounded-sm border border-[#b08a50] bg-[#f5bc60]"><svg class="h-4 w-4" viewBox="0 0 16 16" fill="#fff" stroke="#654"><path d="M1 1h12v4H1zM1 10h9v4H1z"/><path d="M1 7.500h9M15 2v8h-3" fill="none"/></svg></button>
            <button aria-label="Merge cells" class="flex h-[22px] w-7 items-center gap-1"><svg class="h-4 w-4" viewBox="0 0 16 16" fill="#fff" stroke="#678"><path d="M.5 1h15v4H.5zM.5 5h15v6H.5zM.5 11h15v4H.5zM8 1v4M8 11v4"/><path d="M1 8h4M15 8h-4M7 6.500h2v3H7z" stroke="#124"/></svg><svg class="h-1 w-1.5"><use href="#dn"/></svg></button>
          </div>
        </div>
        <p class="h-[19px] bg-[#c1d8f0] pr-5 text-center text-[#3e6aaa]">对齐方式</p><svg class="absolute bottom-1.5 right-1 h-2 w-2"><use href="#launch"/></svg>
      </div>
      <!-- number -->
      <div class="relative flex w-[135px] flex-col rounded border border-[#a5c3e6]">
        <div class="flex flex-1 flex-col gap-2.5 px-[3px] pt-2.5">
          <span class="flex h-[25px] w-[127px] items-center justify-between border border-[#abc1de] bg-[#e8f1fb] px-0.5 text-black">常规<svg class="mr-0.5 h-1 w-1.5"><use href="#dn"/></svg></span>
          <div class="flex h-[22px] gap-[3px] text-black"><span class="flex w-[79px] items-center justify-around rounded-sm border border-[#9ab8de]"><svg class="h-4 w-4" viewBox="0 0 16 16"><path d="M0 1h14v8H0z" fill="#6f94d0" stroke="#345"/><circle cx="7" cy="5" r="2" fill="#fff"/><path d="M8 8h6v2H8zM8 11h6v2H8zM3 13h6v2H3z" fill="#e8b030" stroke="#a87818"/></svg><svg class="h-1 w-1.5"><use href="#dn"/></svg><span>%</span><b class="text-[16px] leading-3">,</b></span>
          <span class="flex w-[45px] items-center justify-around rounded-sm border border-[#9ab8de] text-[8px] font-bold leading-[8px]"><span>←.0<br>.00</span><span>.00<br>→.0</span></span></div>
        </div>
        <p class="h-[19px] bg-[#c1d8f0] pr-5 text-center text-[#3e6aaa]">数字</p><svg class="absolute bottom-1.5 right-1 h-2 w-2"><use href="#launch"/></svg>
      </div>
      <!-- styles -->
      <div class="flex w-[164px] flex-col rounded border border-[#a5c3e6] leading-[17px]">
        <div class="flex flex-1 justify-between px-0.5 pt-[5px]">
          <button class="flex w-12 flex-col items-center"><svg class="h-7 w-7" viewBox="0 0 28 28" stroke="#8aa0c8"><path d="M1 1h24v22H1z" fill="#fff"/><path d="M7 1h6v11H7zM7 18h6v5H7z" fill="#e04a38"/><path d="M7 7h12v5H7z" fill="#4a70d8"/><path d="M1 7h24M1 12h24M1 18h24M13 1v22M19 1v22"/><path d="M14 13h13v14H14z" fill="#fff" stroke="#345"/><path d="M17 17l4-2M17 17l4 2M17 22h7M17 25h7" stroke="#111"/></svg><span class="mt-1.5">条件格式</span><svg class="mt-1.5 h-1 w-1.5"><use href="#dn"/></svg></button>
          <button class="flex flex-col items-center"><svg class="h-7 w-7" viewBox="0 0 28 28"><path d="M1 1h25v22H1z" fill="#fff" stroke="#8aa0c8"/><path d="M7 7h19v16H7z" fill="#9ab8f0"/><path d="M1 7h25M1 12h25M1 18h25M7 1v22M13 1v22M19 1v22" stroke="#8aa0c8"/><path d="M27 6l-9 13-3-2z" fill="#b08050"/><path d="M17 17q3 8-7 9 4-3 4-7z" fill="#4a6fa8"/></svg><span class="mt-1.5">套用</span><span class="flex items-center gap-1">表格格式<svg class="h-1 w-1.5"><use href="#dn"/></svg></span></button>
          <button class="flex flex-col items-center pr-1"><svg class="h-7 w-7" viewBox="0 0 28 28"><path d="M1 1h25v22H1z" fill="#fff" stroke="#8aa0c8"/><path d="M6 6h15v12H6z" fill="#9ab8f0"/><path d="M1 6h25M1 18h25M6 1v22M21 1v22" stroke="#8aa0c8"/><path d="M27 6l-9 13-3-2z" fill="#b08050"/><path d="M17 17q3 8-7 9 4-3 4-7z" fill="#4a6fa8"/></svg><span class="mt-1.5">单元格</span><span class="flex items-center gap-1">样式<svg class="h-1 w-1.5"><use href="#dn"/></svg></span></button>
        </div>
        <p class="h-[19px] bg-[#c1d8f0] text-center text-[#3e6aaa]">样式</p>
      </div>
      <!-- cells -->
      <div class="flex w-[67px] flex-col rounded border border-[#a5c3e6] whitespace-nowrap">
        <div class="flex flex-1 flex-col gap-1 pl-1 pt-1">
          <button class="flex items-center gap-[3px]"><svg class="h-4 w-4 shrink-0" viewBox="0 0 16 16" fill="#fff" stroke="#567"><path d="M1 1h5v4H1zM1 11h5v4H1zM1 5h5v6H1zM10 6h5v4h-5z"/><path d="M7 8h3" stroke="#111"/></svg>插入<svg class="ml-0.5 h-1 w-1.5 shrink-0"><use href="#dn"/></svg></button>
          <button class="flex items-center gap-[3px]"><svg class="h-4 w-4 shrink-0" viewBox="0 0 16 16" fill="#fff" stroke="#567"><path d="M1 1h5v4H1zM1 11h5v4H1zM1 5h5v6H1z"/><path d="M7 2l8 8M15 2l-8 8" stroke="#e03a20" stroke-width="2"/></svg>删除<svg class="ml-0.5 h-1 w-1.5 shrink-0"><use href="#dn"/></svg></button>
          <button class="flex items-center gap-[3px]"><svg class="h-4 w-4 shrink-0" viewBox="0 0 16 16" fill="#fff" stroke="#567"><path d="M2 3h12v12H2zM2 7h12M2 11h12M6 3v12M10 3v12"/><path d="M6 7h4v4H6z" fill="#8ab0f0"/><path d="M2 1h12" stroke-dasharray="2 1"/></svg>格式<svg class="ml-0.5 h-1 w-1.5 shrink-0"><use href="#dn"/></svg></button>
        </div>
        <p class="h-[19px] bg-[#c1d8f0] text-center text-[#3e6aaa]">单元格</p>
      </div>
      <!-- editing -->
      <div class="flex w-[124px] flex-col rounded border border-[#a5c3e6] leading-[17px]">
        <div class="flex flex-1 gap-1 pl-[3px]">
          <div class="flex flex-col gap-[5px] pt-0.5"><button class="flex h-[18px] items-center gap-1.5"><b class="w-4 text-center font-['Liberation_Serif',serif] text-[15px] text-black">Σ</b><svg class="h-1 w-1.5"><use href="#dn"/></svg></button><button aria-label="Fill" class="flex h-[18px] items-center gap-1.5"><svg class="h-4 w-4" viewBox="0 0 16 16"><path d="M1.500 1h13v14h-13z" fill="#fff" stroke="#567"/><path d="M6 3h4v5h3l-5 5-5-5h3z" fill="#2a6fe0"/></svg><svg class="h-1 w-1.5"><use href="#dn"/></svg></button><button aria-label="Clear" class="flex h-[18px] items-center gap-1.5"><svg class="h-4 w-4" viewBox="0 0 16 16"><path d="M2 10l6-7 5 2-5 8-5 0z" fill="#fff" stroke="#456"/><path d="M7 14h6" stroke="#111"/></svg><svg class="h-1 w-1.5"><use href="#dn"/></svg></button></div>
          <button class="-ml-0.5 flex flex-col items-center pt-[5px]"><svg class="h-7 w-7" viewBox="0 0 28 28"><text x="0" y="13" font-size="16" font-weight="bold" font-family="Liberation Serif" fill="#4a6fb0">A</text><text x="0" y="28" font-size="16" font-weight="bold" font-family="Liberation Serif" fill="#a03040">Z</text><path d="M10 5h18l-7 8v10l-4 3V13z" fill="#b8b8b8" stroke="#777"/></svg><span class="mt-1.5">排序和</span><span class="flex items-center gap-1">筛选<svg class="h-1 w-1.5"><use href="#dn"/></svg></span></button>
          <button class="ml-0.5 flex flex-col items-center pt-[5px]"><svg class="h-7 w-7" viewBox="0 0 28 28"><path d="M7 2h5v6h4V2h5l3 12v11h-9v-9h-2v9H4V14z" fill="#5a7ab0" stroke="#2f4a7c"/><path d="M6 16h5v8H6zM17 16h5v8h-5z" fill="#9ab4dc"/></svg><span class="mt-1.5">查找和</span><span class="flex items-center gap-1">选择<svg class="h-1 w-1.5"><use href="#dn"/></svg></span></button>
        </div>
        <p class="h-[19px] bg-[#c1d8f0] text-center text-[#3e6aaa]">编辑</p>
      </div>
    </div>
    <!-- formula bar -->
    <div class="mx-px mt-0.5 flex h-5 shrink-0 border-y border-[#6f9dd9] bg-white text-black">
      <span class="flex w-[159px] items-center justify-end gap-[65px] pr-1.5 font-['Liberation_Mono',monospace] text-[13px]">B50<svg class="h-1.5 w-2" viewBox="0 0 8 6"><path d="M0 0h8L4 5z"/></svg></span>
      <span class="flex w-[76px] items-center justify-between rounded-l-full border border-[#8aa8d8] bg-[linear-gradient(#f2f7fd,#b5cdee)] px-1 font-['Liberation_Serif',serif] text-[14px] font-bold italic text-[#333]"><i class="h-2.5 w-2.5 rounded-full bg-[#b8c4d4]"></i>fx</span>
      <input aria-label="Formula" value="层压叠层结构---RC(%)---铜箔类型" class="min-w-0 flex-1 border-l border-[#8aa8d8] pl-[11px] font-['Liberation_Mono','Noto_Sans_CJK_SC',monospace] text-[14px] outline-none">
      <button aria-label="Expand formula bar" class="flex w-4 items-center justify-center bg-[#cfe0f6]"><svg class="h-2.5 w-2" viewBox="0 0 8 10" fill="none" stroke="#111" stroke-width="1.500"><path d="M1 1l3 3 3-3M1 5l3 3 3-3"/></svg></button>
    </div>
    <!-- sheet -->
    <div class="mt-1 flex min-h-0 flex-1 overflow-hidden border-t border-[#6f9dd9] bg-white">
      <table class="h-px w-[1010px] shrink-0 table-fixed border-separate border-spacing-0 self-start font-['Liberation_Mono','Noto_Sans_CJK_SC',monospace] text-[13px]">
        <colgroup><col class="w-[34px]"><col class="w-[149px]"><col class="w-[549px]"><col class="w-[72px]"><col class="w-[72px]"><col class="w-[72px]"><col></colgroup>
        <thead><tr class="h-[18px] bg-[linear-gradient(#f5f8fc,#d5dfec)] leading-[17px] text-[#234] [&>th]:border-r [&>th]:border-b [&>th]:border-[#9eb6ce] [&>th]:p-0 [&>th]:font-normal"><th class="bg-[#a9c4e9]"><svg class="ml-auto mr-1 h-3 w-3" viewBox="0 0 12 12"><path d="M12 0v12H0z" fill="#dbe8f8"/></svg></th><th>A</th><th class="bg-[linear-gradient(#f9d99f,#f1b95a)]">B</th><th>C</th><th>D</th><th>E</th><th class="pl-1.5!">F</th></tr></thead>
        <tbody id="sheet"></tbody>
      </table>
      <div class="flex flex-1 flex-col border-x border-[#5a80b8] bg-[#7a9ac8]"><span class="h-2 border-y border-[#5a80b8] bg-white"></span><svg class="m-auto mb-0 mt-1.5 h-1.5 w-2 shrink-0" viewBox="0 0 8 6"><path d="M4 0l4 6H0z" fill="#334a70"/></svg><span class="mt-6 flex h-[243px] shrink-0 items-center justify-center border border-[#4a6fa8] bg-[linear-gradient(90deg,#f0f5fc,#b8cbe6)]"><svg class="h-2 w-2" viewBox="0 0 8 8"><path d="M0 1h8M0 4h8M0 7h8" stroke="#4a6fa8"/></svg></span></div>
    </div>
  </div>
</section>

<!-- annotations over the windows -->
<div class="absolute left-[914px] top-[541px] h-[29px] w-[163px] border-[3px] border-[#ee14e6] shadow-[2px_2px_4px_rgba(0,0,0,.6),inset_2px_2px_4px_rgba(0,0,0,.5)]"></div>
<div class="absolute left-[753px] top-[946px] h-[36px] w-[219px] border-[3px] border-[#ee14e6] shadow-[2px_2px_4px_rgba(0,0,0,.6),inset_2px_2px_4px_rgba(0,0,0,.5)]"></div>
<svg class="pointer-events-none absolute left-[1480px] top-[120px] h-[245px] w-[310px]" fill="#7dfa84" stroke="#7dfa84"><path d="M305 5L225 36M63 239L20 180" stroke-width="5" stroke-linecap="round"/><path d="M202 44l24-17 6 17zM4 161l24 19-16 8z" stroke-width="2" stroke-linejoin="round"/></svg>

<!-- input method bar -->
<div class="absolute left-[1754px] top-[356px] flex h-[27px] w-[164px] items-center text-[#4a5064]">
  <svg class="z-10 h-7 w-7 -rotate-6" viewBox="0 0 28 28"><rect x="1" y="1" width="25" height="25" rx="5" fill="#38b020"/><path d="M20 8q-6-3-10-1-4 4 3 6 8 2 5 6-4 3-11 0" fill="none" stroke="#fff" stroke-width="4"/></svg>
  <div class="-ml-1 flex h-[24px] flex-1 items-center justify-between bg-white pl-2.5 pr-1 font-['Noto_Sans_CJK_SC',sans-serif] text-[15px]"><span>五</span>
    <svg class="h-4 w-4" viewBox="0 0 16 16"><circle cx="8" cy="8" r="7" fill="#4a5064"/></svg>
    <svg class="h-4 w-3" viewBox="0 0 12 16"><circle cx="3" cy="5" r="2" fill="none" stroke="#4a5064" stroke-width="1.500"/><path d="M8 8h3v3q0 3-3 3" fill="#4a5064"/></svg>
    <svg class="h-3.5 w-4" viewBox="0 0 16 14" fill="none" stroke="#4a5064"><path d="M1 1h14v12H1z" stroke-width="2"/><path d="M3 4.500h10M3 7.500h10M5 10.500h6" stroke-dasharray="2 1"/></svg>
    <svg class="h-4 w-3" viewBox="0 0 12 16" fill="#bfd2c4"><circle cx="6" cy="4" r="3"/><path d="M0 9q6-4 12 0v6H0z"/></svg>
    <svg class="h-4 w-4" viewBox="0 0 16 16"><path d="M2 14L9 7" stroke="#4a5064" stroke-width="3" stroke-linecap="round"/><path d="M9 1l1 4 3 1 3-3q0 7-6 7-5-3-1-9z" fill="#4a5064"/></svg>
  </div>
</div>
<div class="absolute -right-[25px] top-[931px] flex h-[45px] w-[45px] items-center rounded-full border-2 border-[#ddd] bg-[linear-gradient(#8fe08f,#28a838)] pl-[3px] font-['Liberation_Sans',sans-serif] text-[13px] text-white">62</div>

<script>
const layers = document.getElementById('layers');
const groups = [
  [['to','bg-white'],['ts','bg-[#04a67c]'],['cs','bg-[#ffc850]'],['sig2t','bg-[#ffc850]'],['pln3b','bg-[#d9ab00]'],['ss','bg-[#ffc850]'],['bs','bg-[#04a67c]'],['bo','bg-white']],
  [['drl','bg-[#9ab4be]','bg-[#f00]'],['rout','bg-[#d9d9d9]','bg-[#479a00]']],
  ['tp','bp','dd','npth','datecode-ptd','dwk','dwkby','biaozhu','d'].map(n => [n,'bg-[#9cdbdb]'])
];
layers.innerHTML = groups.map(g => '<li class="mb-[3px] bg-black p-0.5"><ul class="flex flex-col gap-0.5">' + g.map(([n,c,k]) => `
  <li class="flex h-3.5"><span class="flex h-3.5 w-3.5 items-center justify-center ${n==='drl'?'bg-[#1010a0]':'bg-white'}"><i class="block h-2.5 w-2.5 border-2 border-black bg-white"></i></span>
  <span class="mx-0.5 w-3.5 ${k||'bg-black'}"></span><span class="flex w-[81px] justify-between overflow-hidden whitespace-nowrap pl-px ${c}">${n}${n==='drl'?'<svg class="mr-px mt-1 h-[7px] w-[7px] shrink-0" viewBox="0 0 7 7"><path d="M.5 .5h6v6h-6zM3.500 0v7M0 3.500h7" fill="none" stroke="#000"/></svg>':''}</span></li>`).join('') + '</ul></li>').join('');

const field = (v, label, bg, mark) => `<td class="${bg}"><span class="flex h-[31px] p-1.5 pt-[3px] ${mark||'shadow-[inset_2px_2px_#fff,inset_-2px_-2px_#fff,inset_4px_4px_#8c8c8c,inset_-4px_-4px_#ccc]'}"><svg class="mt-0.5 h-4 w-[5px] shrink-0"><use href="#ibeam"/></svg><input aria-label="${label}" value="${v}" class="h-[18px] w-full min-w-0 outline-none"></span></td>`;
const yel = 'shadow-[inset_2px_2px_#ffffd0,inset_-2px_-2px_#ffffd0,inset_4px_4px_#98987a,inset_-4px_-4px_#d0d0b0]';
const toolRow = (t, m, n, fin, dr, bg, sel) => `<tr class="h-[33px]">
  <td><svg class="mx-auto h-5 w-5" viewBox="0 0 20 20"><path d="M.5 .5h19v19H.5z" fill="#fff" stroke="#000"/><path d="M10 4v12M4 10h12" stroke="#000"/><text x="14" y="7" font-size="8" font-family="Liberation Mono">${m}</text></svg></td>
  <td class="bg-[#54cfb2]"><button class="mx-auto block h-[27px] w-[62px] pl-1 text-left shadow-[inset_2px_2px_#b5efe2,inset_-2px_-2px_#2d6f60] ${bg}">${t}</button></td>
  <td class="text-right"><span class="pr-0.5">${n}</span></td>
  ${field('', t+' slot length', 'bg-white')}
  <td class="bg-[#ffffd0]"><button class="mx-auto flex h-[27px] w-[105px] items-center justify-between pl-1.5 pr-1.5 shadow-[inset_2px_2px_#c8c8a0,inset_-2px_-2px_#98987a]">NPlated <svg class="h-2 w-[13px]"><use href="#knoby"/></svg></button></td>
  ${field(fin, t+' finish size', 'bg-[#ffffd0]', yel)}${field('0', t+' plus tolerance', 'bg-[#ffffd0]', sel?'shadow-[inset_3px_3px_#000,inset_-3px_-3px_#000]':yel)}${field('0', t+' minus tolerance', 'bg-[#ffffd0]', yel)}
  ${field(dr, t+' drill size', 'bg-white')}${field('', t+' drill designator', 'bg-white')}<td></td></tr>`;
document.getElementById('tools').innerHTML = '<tr class="h-[3px]"></tr>' +
  toolRow('T01','A','4','3000','3000','bg-[#ffc850]',true) + toolRow('T02','B','160','500','500','bg-[#54cfb2]',false) +
  '<tr class="h-[33px]"><td></td><td><button class="mx-auto block h-[27px] w-[62px] pl-1 text-left shadow-[inset_2px_2px_#b5efe2,inset_-2px_-2px_#2d6f60]">Total</button></td><td class="text-right"><span class="pr-0.5">164</span></td>' + '<td></td>'.repeat(8) + '</tr>';

const rows = [['订单确认日期','2018/7/11 17:33'],['生产型号','4V3C601QA0(9天件)'],['E工号','1114056'],['订单类型','新单(单拼)(外发制作)'],['合同序号','-2.01806E+11'],['文件名称','66F2787C'],['下单时间','2018/7/11 17:33'],['交货日期','2018/7/20 12:23'],['交货数量','8'],['交货面积','0.239'],['交货单位','Set'],['客户工程资料录入','linqiong'],['验收标准','IPC-6012 Ⅱ级'],['快捷标记','加(ML-8)'],['FP标记类型','FP+E档案号+94V(可选)'],['客户标记','不加'],['周期标记','加'],['板厚(mm)','1.83'],['铜箔厚度(OZ)',' (1/0.33)'],['成品尺寸长(mm)','227.74'],['成品尺寸宽(mm)','131.06'],['拼板数su','10'],['喷锡','√'],['高TG','√'],['板材','R-5775G'],['测试','飞针测试'],['成品板厚公差(mm)','(+/-10%)']];
// Han runs are set larger than the half-width characters beside them
const mix = (s, big) => s.replace(/[\u2160-\u217f\u221a\u4e00-\u9fff]+/g, m => `<span class="${big?'text-[24px]':'text-[16px]'}">${m}</span>`);
document.getElementById('sheet').innerHTML = rows.map(([a,b],i) => {
  const big = i === 2, h = big ? "h-[28px] font-['Liberation_Serif','Noto_Sans_CJK_SC',serif] text-[25px] font-bold leading-[28px] pl-1" : 'h-[18px] leading-[19px] pl-0.5';
  const e = '<td class="border-r border-b border-[#d0d7e5] p-0"></td>';
  return `<tr><th class="border-r border-b border-[#9eb6ce] bg-[#e4ecf7] p-0 align-bottom font-normal leading-[18px] text-[#234]">${i+4}</th>
  <td class="border-b border-r-2 border-black p-0"><div class="whitespace-pre ${h}">${mix(a,big)}</div></td>
  <td class="border-b border-r-2 border-black p-0"><div class="whitespace-pre ${h}">${mix(b,big)}</div></td>${e}${e}${e}${e}</tr>`;
}).join('');

const xterm = '<path d="M0 2h30v10H0z" fill="#00108a" stroke="#ccc"/><path d="M20 4v6M23 4v6M26 4v6" stroke="#fff"/>';
const icons = ['<path d="M0 2h22v10H0z" fill="#2fae52"/><path d="M6 6h10v6H6z" fill="#fff"/>','<circle cx="15" cy="14" r="13" fill="#2a9df0"/>','<path d="M0 2l14 9H0z" fill="#10a8a8"/>',xterm,xterm,xterm,xterm,xterm,xterm,'<path d="M4 6l16-4v10H2z" fill="#e03a28"/>','<path d="M0 4h24v8H0z" fill="#fff"/><path d="M3 6h18v6H3z" fill="#3aa0d8"/>','<path d="M0 2h10v10H0zM16 2h14v10H16z" fill="#1a50c0"/>','<circle cx="14" cy="13" r="10" fill="#f4d470"/>','<path d="M4 4h20v8H4z" fill="#fff" stroke="#2f9a48" stroke-width="2"/>','<path d="M4 4h20v8H4z" fill="#fff" stroke="#2f9a48" stroke-width="2"/>','<path d="M4 5h20v8H4z" fill="#10a8a8"/>','<circle cx="18" cy="14" r="9" fill="#58a8e0"/><circle cx="30" cy="6" r="5" fill="#d8a870"/>'];
document.getElementById('tasks').innerHTML = '<button aria-label="Start" class="flex w-[57px] shrink-0 justify-center"><span class="mt-0.5 h-9 w-9 rounded-full bg-[radial-gradient(#e06a30,#3a6ea5_60%,#9cc)]"></span></button>' +
  icons.map((s,i) => `<button aria-label="Task ${i+1}" class="h-10 w-[86px] shrink-0 border-l border-t border-white/60 bg-linear-to-r from-white/30 to-white/5 pl-2"><svg class="h-10 w-9">${s}</svg></button>`).join('') +
  '<time class="ml-auto mr-7 leading-5">19:02</time>';
</script>
</body>
</html>
